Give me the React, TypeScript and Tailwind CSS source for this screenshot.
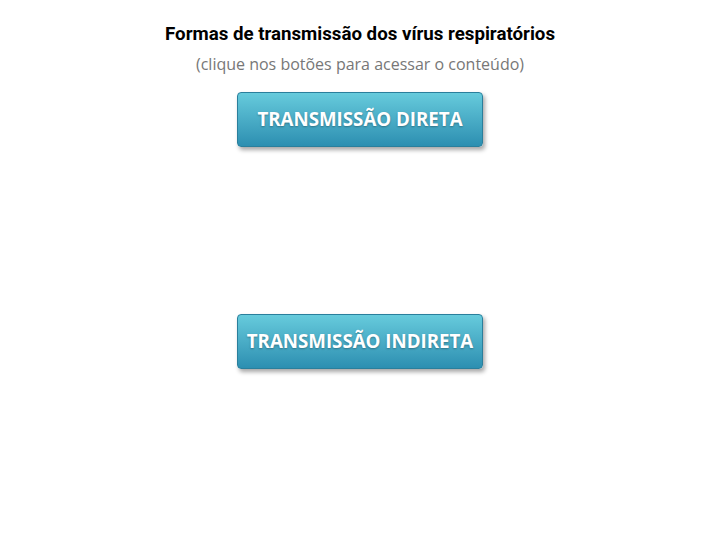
import React from 'react';

const BotaoTransmissao: React.FC<{ label: string }> = ({ label }) => (
  <button
    className="w-[246px] h-[55px] rounded-[4px] border border-[#2a7f9c] bg-gradient-to-b from-[#66cbdc] to-[#2c8fb1] text-white text-[18.7px] font-bold leading-[24px] pb-[2px] shadow-[2px_3px_4px_rgba(0,0,0,0.35)] [text-shadow:0_1px_2px_rgba(0,0,0,0.3)]"
    style={{ fontFamily: '"Open Sans", sans-serif' }}
  >
    {label}
  </button>
);

export default function App() {
  return (
    <div className="w-[720px] h-[540px] bg-white flex flex-col items-center">
      {/* Título */}
      <h1
        className="mt-[23px] text-[18.7px] font-bold text-black leading-[22px]"
        style={{ fontFamily: 'Roboto, sans-serif' }}
      >
        Formas de transmissão dos vírus respiratórios
      </h1>
      <p
        className="mt-[8px] text-[16px] text-[#777777] leading-[22px]"
        style={{ fontFamily: '"Open Sans", sans-serif' }}
      >
        (clique nos botões para acessar o conteúdo)
      </p>

      {/* Botões */}
      <div className="mt-[17px]">
        <BotaoTransmissao label="TRANSMISSÃO DIRETA" />
      </div>
      <div className="mt-[167px]">
        <BotaoTransmissao label="TRANSMISSÃO INDIRETA" />
      </div>
    </div>
  );
}
